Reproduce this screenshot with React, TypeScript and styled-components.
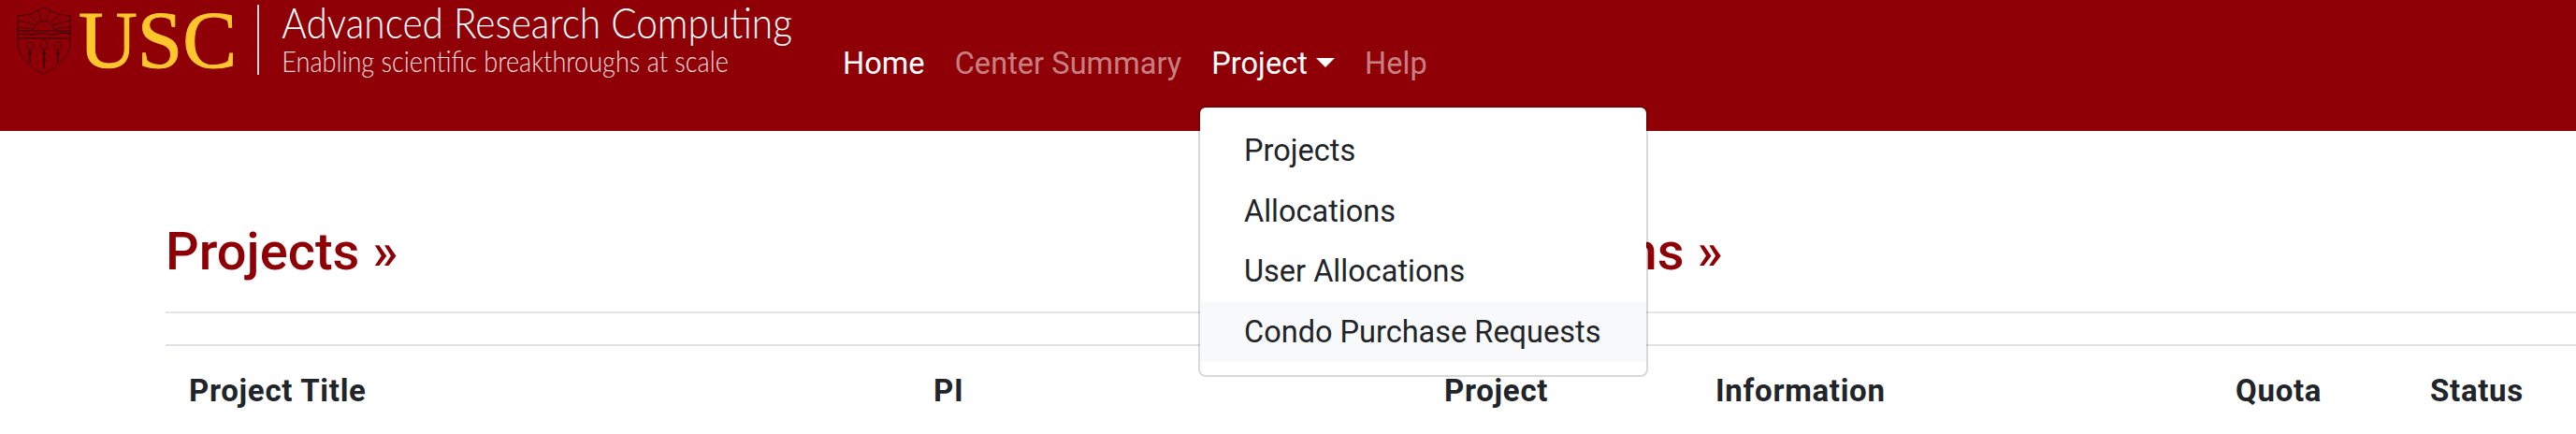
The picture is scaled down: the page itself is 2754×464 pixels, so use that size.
import React from 'react';
import styled, { createGlobalStyle } from 'styled-components';

const GlobalStyle = createGlobalStyle`
  html, body {
    margin: 0;
    padding: 0;
    background: #fff;
    overflow: hidden;
  }
  body {
    font-family: Roboto, "Liberation Sans", sans-serif;
    color: #212529;
  }
`;

const Page = styled.div`
  position: relative;
  width: 2754px;
  height: 464px;
  overflow: hidden;
`;

const Navbar = styled.nav`
  display: flex;
  align-items: flex-start;
  height: 140px;
  background: #8f0006;
`;

const Brand = styled.div`
  display: flex;
  align-items: flex-start;
  flex: none;
  width: 885px;
  padding: 7px 0 0 18px;
  box-sizing: border-box;

  & > * {
    flex: none;
  }
`;

const Wordmark = styled.span`
  margin: -2px 0 0 8px;
  font-family: "Liberation Serif", serif;
  font-size: 87px;
  line-height: 76px;
  color: #ffc72c;
  -webkit-text-stroke: 1px #ffc72c;
`;

const BrandDivider = styled.span`
  width: 2px;
  height: 75px;
  margin: -2px 24px 0 22px;
  background: #f0d5d6;
`;

const BrandText = styled.div`
  display: flex;
  flex-direction: column;
  margin-top: -7px;
  font-family: Lato, "Open Sans", sans-serif;
  font-weight: 300;
  color: #fff;
  white-space: nowrap;
`;

const BrandTitle = styled.span`
  font-size: 40.6px;
  line-height: 48px;
  transform: scaleY(1.12);
`;

const BrandTagline = styled.span`
  font-size: 27.1px;
  line-height: 34px;
  color: #f3dcdc;
  transform: scaleY(1.15);
`;

const NavLinks = styled.div`
  display: flex;
  align-items: center;
  height: 136px;
`;

const NavLink = styled.a<{ $muted?: boolean }>`
  display: flex;
  align-items: center;
  padding: 0 16px;
  font-size: 32.5px;
  letter-spacing: 0.05px;
  color: ${props => (props.$muted ? 'rgba(255, 255, 255, 0.5)' : '#fff')};
`;

const Caret = styled.span`
  width: 0;
  height: 0;
  margin: 0 0 2px 9px;
  border-top: 10px solid #fff;
  border-left: 10px solid transparent;
  border-right: 10px solid transparent;
`;

const Menu = styled.div`
  position: absolute;
  top: 113px;
  left: 1281px;
  width: 481px;
  height: 290px;
  box-sizing: border-box;
  padding: 14px 0;
  background: #fff;
  border: 2px solid rgba(0, 0, 0, 0.15);
  border-radius: 8px;
  background-clip: padding-box;
`;

const MenuItem = styled.a<{ $active?: boolean }>`
  display: block;
  height: 64.5px;
  padding-left: 47px;
  font-size: 32.5px;
  line-height: 64.5px;
  color: #212529;
  background: ${props => (props.$active ? '#f8f9fa' : 'transparent')};
`;

const Content = styled.main`
  padding-left: 177px;
`;

const Headings = styled.div`
  display: grid;
  grid-template-columns: 1342px 1fr;
  height: 195px;
  border-bottom: 2px solid #e4e5e6;
  box-sizing: border-box;
  margin-bottom: 33px;
`;

const Heading = styled.h2`
  margin: 0;
  padding-top: 99px;
  font-size: 56px;
  line-height: 60px;
  font-weight: 500;
  color: #8f0006;
`;

const TableHead = styled.div`
  display: grid;
  grid-template-columns: 796px 546px 290px 556px 208px 1fr;
  border-top: 2px solid #dee2e6;
`;

const HeadCell = styled.div`
  padding: 24px 25px;
  font-size: 33px;
  line-height: 48px;
  font-weight: 700;
  letter-spacing: 0.7px;
  color: #212529;
`;

const Shield: React.FC = () => (
  <svg width="58" height="73" viewBox="0 0 58 73" fill="none" stroke="#2d0a0c" strokeWidth="0.8">
    <path d="M1 10 L15 8 L29 1 L43 8 L57 10 L57 38 C57 54 42 66 29 72 C16 66 1 54 1 38 Z" />
    <path d="M1 22 L18 24 M1 15 L20 20 M11 8 L23 18 M22 4 L27 16 M36 4 L31 16 M47 8 L35 18 M57 15 L38 20 M57 22 L40 24" />
    <path d="M18 25 C19 13 39 13 40 25" />
    <path d="M1 26 L57 26 M1 30 C10 27 14 32 22 29 C30 27 36 32 44 29 C50 27 54 29 57 29 M1 34 L57 34" strokeWidth="1.2" />
    <ellipse cx="14" cy="42" rx="3.5" ry="4.5" />
    <ellipse cx="29" cy="41" rx="4" ry="5" />
    <ellipse cx="44" cy="42" rx="3.5" ry="4.5" />
    <path d="M14 47 L14 60 M12 50 L16 50 M29 46 L29 66 M27 50 L31 50 M27 57 L31 57 M44 47 L44 60 M42 50 L46 50" strokeWidth="1.4" />
  </svg>
);

const menuItems = ['Projects', 'Allocations', 'User Allocations', 'Condo Purchase Requests'];

const columns = ['Project Title', 'PI', 'Project', 'Information', 'Quota', 'Status'];

const App: React.FC = () => (
  <Page>
    <GlobalStyle />
    <Navbar>
      <Brand>
        <Shield />
        <Wordmark>USC</Wordmark>
        <BrandDivider />
        <BrandText>
          <BrandTitle>Advanced Research Computing</BrandTitle>
          <BrandTagline>Enabling scientific breakthroughs at scale</BrandTagline>
        </BrandText>
      </Brand>
      <NavLinks>
        <NavLink>Home</NavLink>
        <NavLink $muted>Center Summary</NavLink>
        <NavLink>
          Project
          <Caret />
        </NavLink>
        <NavLink $muted>Help</NavLink>
      </NavLinks>
    </Navbar>
    <Content>
      <Headings>
        <Heading>Projects »</Heading>
        <Heading>Allocations »</Heading>
      </Headings>
      <TableHead>
        {columns.map(column => (
          <HeadCell key={column}>{column}</HeadCell>
        ))}
      </TableHead>
    </Content>
    <Menu>
      {menuItems.map((item, index) => (
        <MenuItem key={item} $active={index === menuItems.length - 1}>
          {item}
        </MenuItem>
      ))}
    </Menu>
  </Page>
);

export default App;
